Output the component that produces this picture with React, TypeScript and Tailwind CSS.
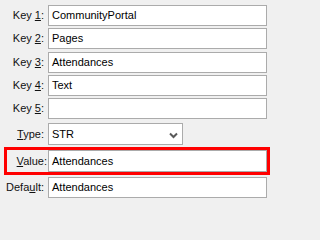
import React from 'react';

const Field = ({ text }: { text: string }) => (
  <div className="h-[21px] w-[219px] border border-[#ababab] bg-white pl-[3px] leading-[19px] text-black">
    {text}
  </div>
);

const Label = ({ pre, u, post }: { pre: string; u: string; post: string }) => (
  <span>
    {pre}
    <span className="underline underline-offset-[1px]">{u}</span>
    {post}
  </span>
);

const Row = ({ label, text, className = '' }: { label: React.ReactNode; text: string; className?: string }) => (
  <div className={`flex items-center ${className}`}>
    <div className="w-[45px] pr-[1px] text-right">{label}</div>
    <div className="ml-[3px]">
      <Field text={text} />
    </div>
  </div>
);

export default function App() {
  return (
    <div className="min-h-screen w-full bg-[#f0f0f0]">
      <div className="h-[202px] w-[271px] pt-[5px] font-['Liberation_Sans',sans-serif] text-[11px] text-[#111]">
        <Row label={<Label pre="Key " u="1" post=":" />} text="CommunityPortal" />
        <Row label={<Label pre="Key " u="2" post=":" />} text="Pages" className="mt-[2px]" />
        <Row label={<Label pre="Key " u="3" post=":" />} text="Attendances" className="mt-[3px]" />
        <Row label={<Label pre="Key " u="4" post=":" />} text="Text" className="mt-[2px]" />
        <Row label={<Label pre="Key " u="5" post=":" />} text="" className="mt-[2px]" />

        {/* Type select */}
        <div className="mt-[4px] flex items-center">
          <div className="w-[45px] pr-[1px] text-right">
            <Label pre="" u="T" post="ype:" />
          </div>
          <div className="ml-[3px] flex h-[22px] w-[135px] items-center justify-between border border-[#ababab] bg-white pl-[3px] pr-[4px] text-black">
            <span>STR</span>
            <svg width="9" height="7" viewBox="0 0 9 7" className="mt-[2px]">
              <path d="M1 1.5 L4.5 5 L8 1.5" fill="none" stroke="#5a5a5a" strokeWidth="2" />
            </svg>
          </div>
        </div>

        {/* Highlighted value row */}
        <div className="ml-[4px] mt-[2px] flex w-[266px] items-center border-[3px] border-[#ff0000]">
          <div className="w-[41px] pr-[1px] text-right">
            <Label pre="" u="V" post="alue:" />
          </div>
          <div className="h-[22px] flex-1 border border-[#ababab] bg-white pl-[3px] leading-[20px] text-black">
            Attendances
          </div>
        </div>

        <Row label={<Label pre="Defa" u="u" post="lt:" />} text="Attendances" className="mt-[2px]" />
      </div>
    </div>
  );
}
